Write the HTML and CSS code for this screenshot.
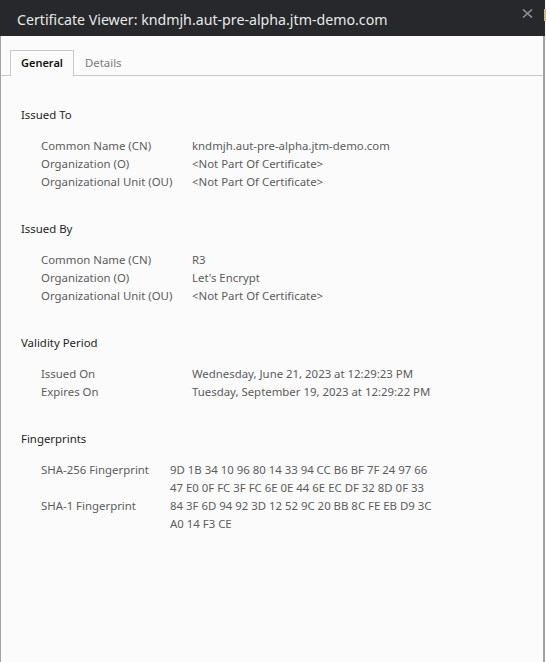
FILE: index.html
```html
<!DOCTYPE html>
<html>
<head>
	<title>Certificate Viewer</title>
	<link rel="stylesheet" href="styles.css">
</head>
<body>
	<div class="ventana">
		<div class="barra-titulo">
			<span class="titulo">Certificate Viewer: kndmjh.aut-pre-alpha.jtm-demo.com</span>
			<span class="cerrar">
				<svg width="11" height="9" viewBox="0 0 11 9"><path d="M1 0.5 L10 8.5 M10 0.5 L1 8.5" stroke="#8e9094" stroke-width="1.6"/></svg>
			</span>
			<span class="borde-fondo"></span>
		</div>
		<div class="pestanas">
			<div class="pestana activa">General</div>
			<div class="pestana">Details</div>
		</div>
		<div class="contenido">
			<div class="seccion">
				<h2>Issued To</h2>
				<div class="fila"><span class="etiqueta">Common Name (CN)</span><span>kndmjh.aut-pre-alpha.jtm-demo.com</span></div>
				<div class="fila"><span class="etiqueta">Organization (O)</span><span>&lt;Not Part Of Certificate&gt;</span></div>
				<div class="fila"><span class="etiqueta">Organizational Unit (OU)</span><span>&lt;Not Part Of Certificate&gt;</span></div>
			</div>
			<div class="seccion">
				<h2>Issued By</h2>
				<div class="fila"><span class="etiqueta">Common Name (CN)</span><span>R3</span></div>
				<div class="fila"><span class="etiqueta">Organization (O)</span><span>Let's Encrypt</span></div>
				<div class="fila"><span class="etiqueta">Organizational Unit (OU)</span><span>&lt;Not Part Of Certificate&gt;</span></div>
			</div>
			<div class="seccion">
				<h2>Validity Period</h2>
				<div class="fila"><span class="etiqueta">Issued On</span><span>Wednesday, June 21, 2023 at 12:29:23 PM</span></div>
				<div class="fila"><span class="etiqueta">Expires On</span><span>Tuesday, September 19, 2023 at 12:29:22 PM</span></div>
			</div>
			<div class="seccion huellas">
				<h2>Fingerprints</h2>
				<div class="fila"><span class="etiqueta">SHA-256 Fingerprint</span><span>9D 1B 34 10 96 80 14 33 94 CC B6 BF 7F 24 97 66<br>47 E0 0F FC 3F FC 6E 0E 44 6E EC DF 32 8D 0F 33</span></div>
				<div class="fila"><span class="etiqueta">SHA-1 Fingerprint</span><span>84 3F 6D 94 92 3D 12 52 9C 20 BB 8C FE EB D9 3C<br>A0 14 F3 CE</span></div>
			</div>
		</div>
	</div>
</body>
</html>
```

FILE: styles.css
```css
html, body {
	margin: 0;
	height: 100%;
}
body {
	font-family: "Noto Sans", "Open Sans", sans-serif;
	font-size: 11.4px;
	background-color: #fbfbfb;
}
.ventana {
	height: 100%;
	box-sizing: border-box;
	border-left: 1px solid #a3a3a3;
	border-right: 2px solid #a3a3a3;
	margin-right: 1px;
	background-color: #fbfbfb;
}
.barra-titulo {
	height: 36px;
	background-color: #26282c;
	display: flex;
	align-items: flex-end;
	justify-content: space-between;
	margin-left: -1px;
	margin-right: -2px;
	position: relative;
}
.titulo {
	color: #e8e8e8;
	font-size: 14.2px;
	line-height: 20px;
	padding-left: 17px;
	padding-bottom: 6px;
}
.cerrar {
	position: absolute;
	right: 12px;
	top: 9px;
	width: 11px;
	height: 9px;
}
.cerrar svg {
	display: block;
}
.borde-fondo {
	position: absolute;
	right: -1px;
	top: 9px;
	width: 2px;
	height: 12px;
	background-color: #c9b98f;
}
.pestanas {
	display: flex;
	padding: 14px 0 0 9px;
	border-bottom: 1px solid #c9c9c9;
}
.pestana {
	height: 24px;
	line-height: 24px;
	padding: 0 10px;
	color: #7a7a7a;
	border: 1px solid transparent;
	border-bottom: none;
	margin-bottom: -1px;
}
.pestana.activa {
	color: #111;
	font-weight: 600;
	font-size: 11px;
	border-color: #c9c9c9;
	background-color: #fbfbfb;
	padding-bottom: 1px;
}
.contenido {
	padding: 30px 0 0 20px;
}
.seccion {
	margin-bottom: 29px;
}
.seccion h2 {
	margin: 0 0 13px 0;
	font-size: 11.4px;
	font-weight: normal;
	line-height: 18px;
	color: #1e1e1e;
}
.fila {
	display: flex;
	line-height: 18px;
	color: #5c5c5c;
	padding-left: 20px;
}
.etiqueta {
	width: 151px;
	flex-shrink: 0;
}
.huellas .etiqueta {
	width: 129px;
}
```
